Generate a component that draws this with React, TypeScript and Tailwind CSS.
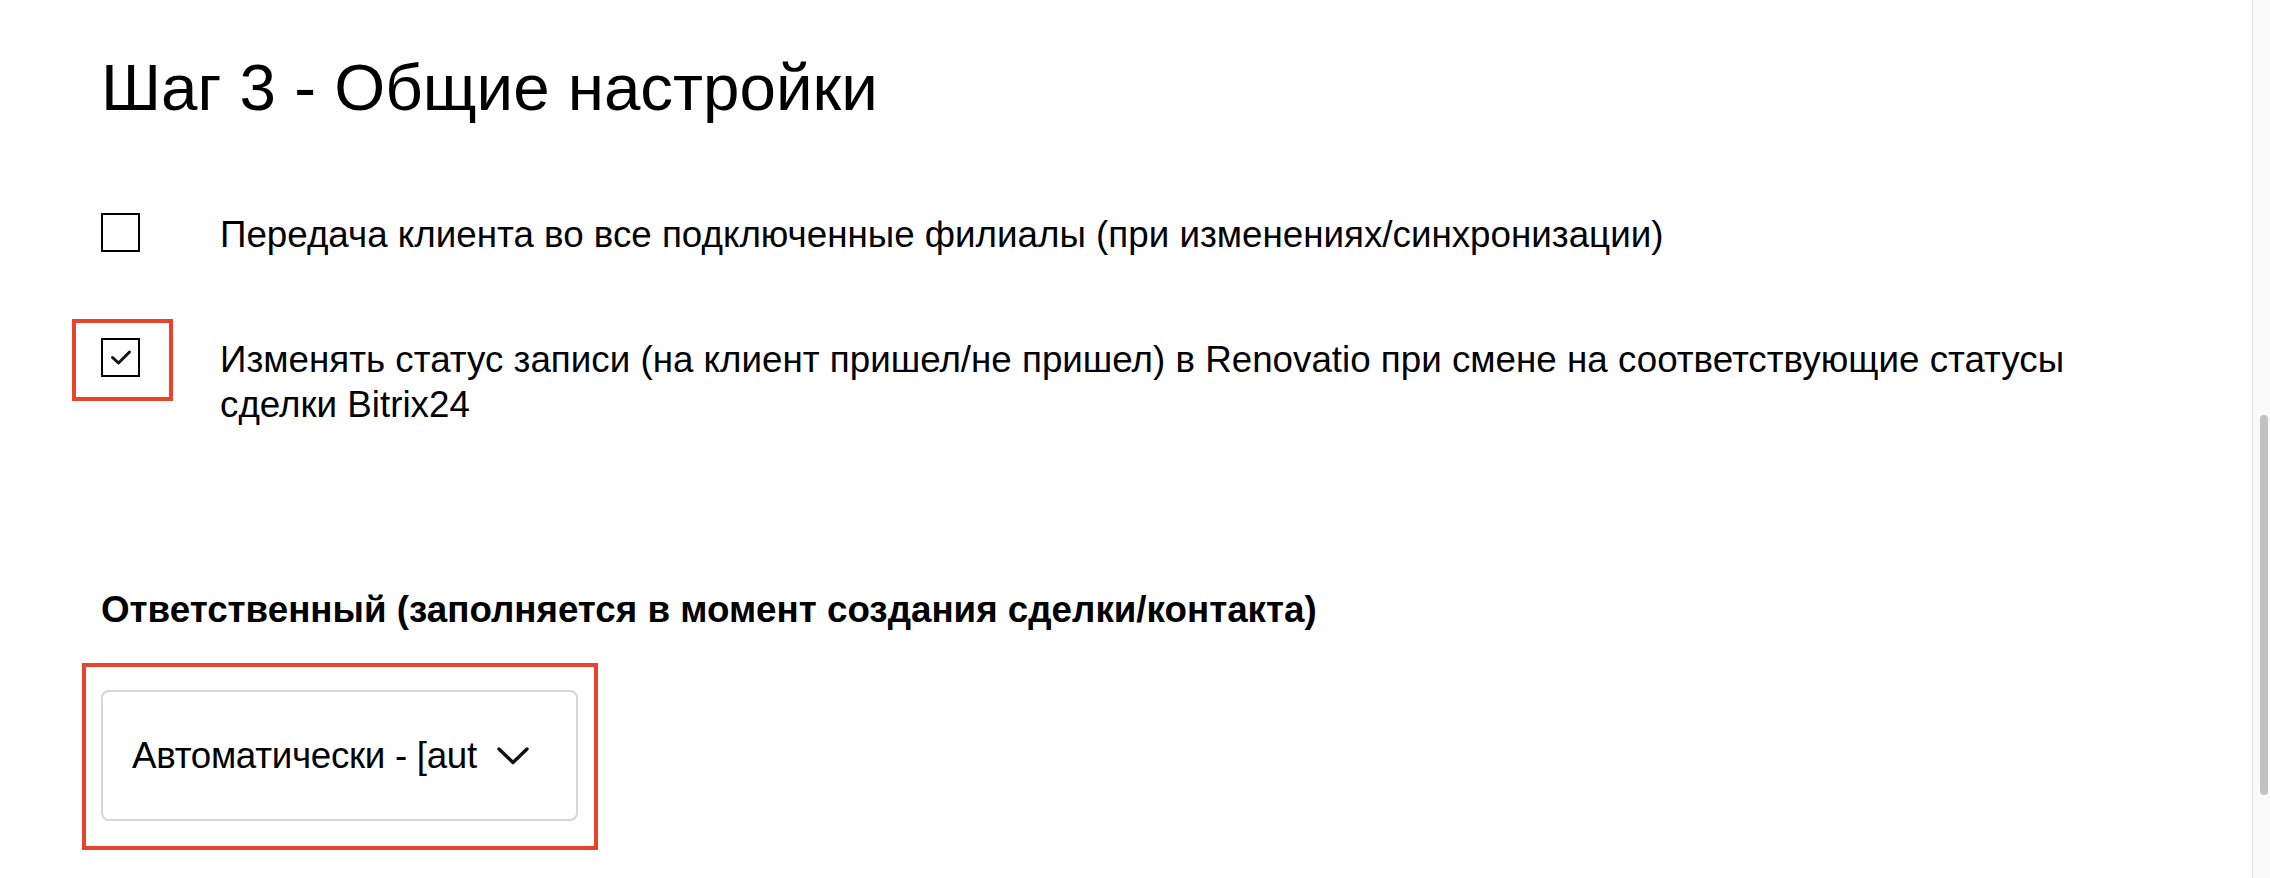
import React from 'react';

const font = { fontFamily: '"Liberation Sans", Arial, Helvetica, sans-serif' };

const Checkbox = ({ checked }: { checked?: boolean }) => (
  <div className="mt-[1px] mr-[80px] flex h-[39px] w-[39px] shrink-0 items-center justify-center border-2 border-black bg-white">
    {checked && (
      <svg width="22" height="17" viewBox="0 0 22 17" fill="none">
        <path d="M2.5 8.5 L8.5 14 L19.5 3" stroke="#111" strokeWidth="3" strokeLinecap="round" strokeLinejoin="round" />
      </svg>
    )}
  </div>
);

const App = () => {
  return (
    <div className="flex h-[878px] w-full overflow-hidden bg-white text-black" style={font}>
      <main className="flex-1 pl-[101px] pr-[130px] pt-[50px]">
        <h1 className="text-[65.5px] font-normal leading-[76px]">Шаг 3 - Общие настройки</h1>

        {/* options */}
        <div className="mt-[86px] flex flex-col gap-[80px]">
          <div className="flex items-start">
            <Checkbox />
            <p className="text-[36.75px] leading-[45px]">
              Передача клиента во все подключенные филиалы (при изменениях/синхронизации)
            </p>
          </div>
          <div className="flex items-start">
            <div className="relative">
              <Checkbox checked />
              <div className="pointer-events-none absolute left-[-29px] top-[-18px] h-[82px] w-[101px] border-4 border-[#e8442b]" />
            </div>
            <p className="text-[36.75px] leading-[45px]">
              Изменять статус записи (на клиент пришел/не пришел) в Renovatio при смене на соответствующие статусы сделки Bitrix24
            </p>
          </div>
        </div>

        <h3 className="mt-[160px] text-[36.75px] font-bold leading-[45px]">
          Ответственный (заполняется в момент создания сделки/контакта)
        </h3>

        <div className="relative mt-[58px] w-[477px]">
          <div className="flex h-[131px] w-[477px] items-center rounded-[8px] border-2 border-[#d5d5da] bg-white pl-[29px]">
            <span className="w-[346px] overflow-hidden whitespace-nowrap text-[36.75px] leading-[45px] tracking-[-0.3px]">
              Автоматически - [auto]
            </span>
            <svg className="ml-[19px]" width="32" height="18" viewBox="0 0 32 18" fill="none">
              <path d="M2 2 L16 15.5 L30 2" stroke="#111" strokeWidth="3.4" strokeLinecap="round" strokeLinejoin="round" />
            </svg>
          </div>
          <div className="pointer-events-none absolute left-[-19px] top-[-27px] h-[187px] w-[516px] border-4 border-[#e8442b]" />
        </div>
      </main>

      {/* scrollbar */}
      <aside className="w-[18px] shrink-0 border-l border-[#e6e6e6] bg-[#fafafa] pl-[7px] pt-[415px]">
        <div className="h-[380px] w-[8px] rounded-full bg-[#c1c1c1]" />
      </aside>
    </div>
  );
};

export default App;
